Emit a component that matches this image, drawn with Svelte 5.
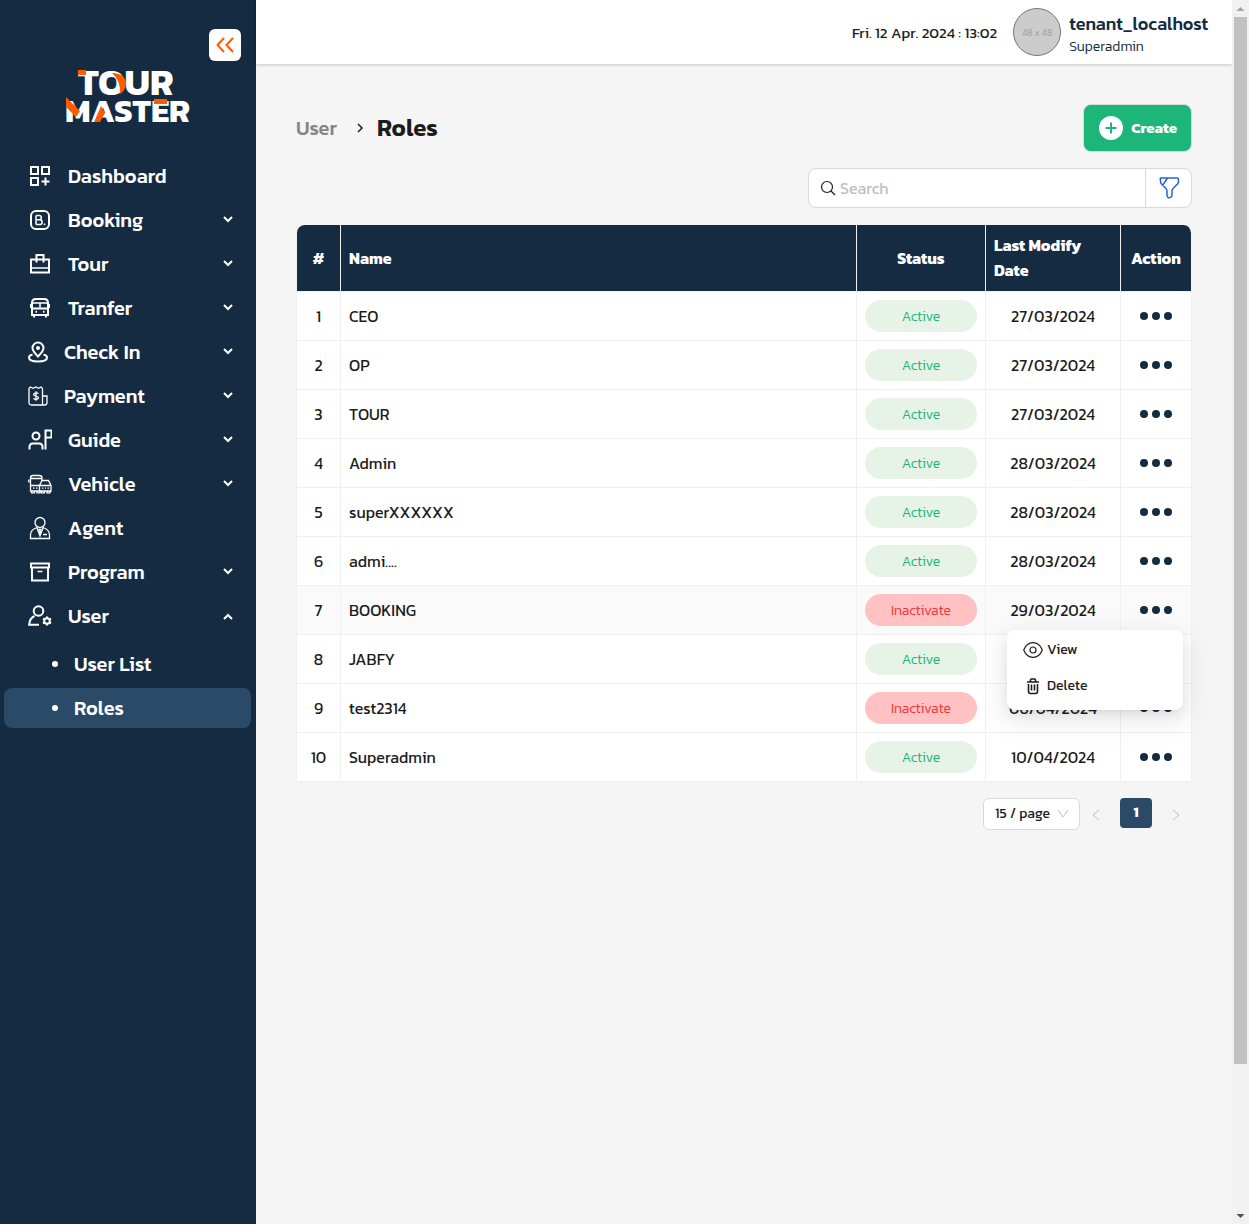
<script>
  const menu = [
    { label: 'Dashboard', icon: 'dashboard' },
    { label: 'Booking', icon: 'booking', expandable: true },
    { label: 'Tour', icon: 'tour', expandable: true },
    { label: 'Tranfer', icon: 'bus', expandable: true },
    { label: 'Check In', icon: 'pin', expandable: true, narrow: true },
    { label: 'Payment', icon: 'payment', expandable: true, narrow: true },
    { label: 'Guide', icon: 'guide', expandable: true },
    { label: 'Vehicle', icon: 'vehicle', expandable: true },
    { label: 'Agent', icon: 'agent' },
    { label: 'Program', icon: 'program', expandable: true },
    { label: 'User', icon: 'user', expandable: true, open: true, children: ['User List', 'Roles'] }
  ];

  const rows = [
    { name: 'CEO', active: true, date: '27/03/2024' },
    { name: 'OP', active: true, date: '27/03/2024' },
    { name: 'TOUR', active: true, date: '27/03/2024' },
    { name: 'Admin', active: true, date: '28/03/2024' },
    { name: 'superXXXXXX', active: true, date: '28/03/2024' },
    { name: 'admi....', active: true, date: '28/03/2024' },
    { name: 'BOOKING', active: false, date: '29/03/2024' },
    { name: 'JABFY', active: true, date: '03/04/2024' },
    { name: 'test2314', active: false, date: '06/04/2024' },
    { name: 'Superadmin', active: true, date: '10/04/2024' }
  ];

  let openRow = $state(6);
  let search = $state('');
  let selected = $state('Roles');
</script>

{#snippet menuIcon(name)}
  {#if name === 'dashboard'}
    <path d="M3 3h7v7H3zM14 3h7v7h-7zM3 14h7v7H3zM17.500 13.500v8M13.500 17.500h8" />
  {:else if name === 'booking'}
    <rect x="3" y="3" width="18" height="18" rx="5" />
    <path class="medium" d="M8 7.500v9M8 7.500h3.200a2.100 2.100 0 0 1 0 4.300H8M8 11.800h3.800a2.300 2.300 0 0 1 0 4.700H8M16.500 15.500v1.700" />
  {:else if name === 'tour'}
    <path d="M3 7.500h18v13H3zM8.500 10.500V3h7v7.500" />
    <path class="medium" d="M3 16h18" />
  {:else if name === 'bus'}
    <path d="M4 7q0-4 4-4h8q4 0 4 4v12H4zM4 12.500h16M6 19v2.500M18 19v2.500M3 8v4M21 8v4" />
    <path class="medium" d="M4 7h16M12 7v5.500" />
    <path d="M7.500 15.800h1.500M15 15.800h1.500" />
  {:else if name === 'pin'}
    <path d="M10 15.500C6 11.500 4.500 9.500 4.500 7a5.500 5.500 0 0 1 11 0c0 2.500-1.500 4.500-5.500 8.500z" />
    <circle cx="10" cy="7" r="1" />
    <path d="M4.500 13.500C2.500 14 1 15 1 16.500 1 19 5 20.500 10 20.500s9-1.500 9-4c0-1.500-1.500-2.500-3.500-3" />
  {:else if name === 'payment'}
    <g class="thin">
      <path d="M1 3.500 2.500 2 5 3.300 8 2l2.500 1.300L13 2l1.500 1.500V20H3.500Q1 20 1 17.500zM14.500 11H19v6.500q0 2.500-2.500 2.500h-3" />
      <path d="M10.500 8.700C9.500 7.500 5.700 7.400 5.700 9.400c0 2.200 4.800 1.200 4.800 3.400 0 2-4 1.900-5 .5M8 6.300v9.500" />
    </g>
  {:else if name === 'guide'}
    <circle cx="8" cy="8" r="3.500" />
    <path d="M1.500 21.500V19q0-3.500 3.500-3.500h6q3.500 0 3.500 3.500v2.500M17.500 21.500V2.500h6v7h-6" />
  {:else if name === 'vehicle'}
    <g class="thin">
      <path d="M12 19H2.500V6q0-2.500 2.500-2.500h6.500q2.500 0 2.500 2.500v3M2.500 6.500H14M2.500 13.500h9M.8 7.500v3" />
      <path d="M11.500 19v-5.500L14 8.500h6.500l2.500 5V19zM11.500 13.500H23" />
      <path d="M5 16.200h1.500M8 16.200h1.500M14 16.200h1.500M17 16.200h1M19.500 16.200H21M3.500 19v1.800h3V19M9 19v1.800h3V19M13.500 19v1.800h3V19M19 19v1.800h3V19" />
    </g>
  {:else if name === 'agent'}
    <g class="thin">
      <circle cx="12" cy="6.500" r="5" />
      <path d="M8.800 11.500C4.500 13 2.500 15.500 2.500 19v3.500h19V19c0-3.500-2-6-6.300-7.500M8.800 11.500 12 20l3.200-8.500M15 18.500h4" />
      <path d="M11 13.500 12 19l1-5.500z" />
    </g>
  {:else if name === 'program'}
    <path d="M3 3.500h18v4H3zM4 7.500v13h16v-13" />
    <path class="medium" d="M9.500 11.500h5" />
  {:else if name === 'user'}
    <circle cx="10.500" cy="7" r="4.800" />
    <path d="M6.500 12C3 13.500 1.500 17 1.200 20.700h9.800" />
    <circle cx="19" cy="17" r="2.800" />
    <path d="M19 12.500v2M19 19.500v2M15 14.700l1.700 1M21.300 18.300l1.700 1M15 19.300l1.700-1M21.300 15.700l1.700-1" />
  {/if}
{/snippet}

<div class="app">
  <aside class="sidebar">
    <div class="collapse-row">
      <button class="collapse" aria-label="Collapse menu">
        <svg width="20" height="20" viewBox="0 0 20 20"><path d="M9 3 2.500 10 9 17M18 3l-6.500 7 6.500 7" /></svg>
      </button>
    </div>
    <svg class="logo" width="124" height="56" viewBox="0 0 124 56" role="img" aria-label="Tour Master">
      <text x="12" y="27" font-size="37">TOUR</text>
      <text x="-1" y="54" font-size="33">MASTER</text>
      <path d="M12 2h8v5h-8zM46 5q13 0 14 10 0 7-6 11 1-13-8-21zM0 29l14 14-4 6L0 39zM28 54l7-16 4 7-5 9zM88 31h13v5H88z" />
    </svg>
    <nav class="menu">
      {#each menu as item}
        <button class="item" aria-expanded={item.expandable ? !!item.open : undefined}>
          <svg class="glyph" width={item.narrow ? 20 : 24} height="24" viewBox={item.narrow ? '0 0 20 22' : '0 0 24 24'}>
            {@render menuIcon(item.icon)}
          </svg>
          <span>{item.label}</span>
          {#if item.expandable}
            <svg class="caret" class:up={item.open} width="12" height="12" viewBox="0 0 12 12"><path d="m2 3 4 4 4-4" /></svg>
          {/if}
        </button>
        {#if item.children}
          <div class="submenu">
            {#each item.children as child}
              <button class="subitem" class:selected={selected === child} onclick={() => (selected = child)}>
                <i class="bullet"></i>{child}
              </button>
            {/each}
          </div>
        {/if}
      {/each}
    </nav>
  </aside>

  <div class="page">
    <header class="topbar">
      <time>Fri. 12 Apr. 2024 : 13:02</time>
      <div class="avatar">48 x 48</div>
      <div class="account">
        <strong>tenant_localhost</strong>
        <span>Superadmin</span>
      </div>
    </header>

    <main>
      <div class="title-row">
        <div class="crumbs">
          <a href="#user">User</a>
          <svg width="12" height="12" viewBox="0 0 12 12"><path d="m4 2 4 4-4 4" /></svg>
          <h1>Roles</h1>
        </div>
        <button class="create">
          <svg width="24" height="24" viewBox="0 0 24 24"><circle cx="12" cy="12" r="12" /><path d="M12 6.500v11M6.500 12h11" /></svg>
          Create
        </button>
      </div>

      <div class="search">
        <label>
          <svg width="16" height="16" viewBox="0 0 16 16"><circle cx="7" cy="7" r="5.500" /><path d="m11 11 4 4" /></svg>
          <input type="text" placeholder="Search" aria-label="Search" bind:value={search} />
        </label>
        <button class="filter" aria-label="Filter">
          <svg width="22" height="24" viewBox="0 0 22 24"><path d="M3 2h16q1.500 0 1.500 1.500v2q0 1.500-1 2.500l-4 4q-1.500 1.500-1.500 3v4q0 1.500-1 2.200-1.500 1-3 .3-1-.7-1-2.500v-4q0-1.500-1.500-3l-4-4q-1-1-1-2.500v-2Q1.500 2 3 2zM9.500 2 4.500 9.500" /></svg>
        </button>
      </div>

      <table>
        <colgroup>
          <col class="c-num" /><col /><col class="c-status" /><col class="c-date" /><col class="c-action" />
        </colgroup>
        <thead>
          <tr>
            <th class="center">#</th>
            <th>Name</th>
            <th class="center">Status</th>
            <th>Last Modify Date</th>
            <th class="center">Action</th>
          </tr>
        </thead>
        <tbody>
          {#each rows as row, i}
            <tr class:hovered={openRow === i}>
              <td class="center">{i + 1}</td>
              <td>{row.name}</td>
              <td><span class="badge" class:inactive={!row.active}>{row.active ? 'Active' : 'Inactivate'}</span></td>
              <td class="center">{row.date}</td>
              <td class="action">
                <button class="more" aria-label="Actions for {row.name}" onclick={() => (openRow = openRow === i ? -1 : i)}>
                  <i></i><i></i><i></i>
                </button>
                {#if openRow === i}
                  <div class="dropdown">
                    <button>
                      <svg width="20" height="20" viewBox="0 0 20 20"><path d="M.7 10C2.500 5.500 6 2.700 10 2.700s7.500 2.800 9.300 7.300c-1.800 4.500-5.300 7.300-9.300 7.300S2.500 14.500.7 10z" /><circle cx="10" cy="10" r="3" /></svg>
                      View
                    </button>
                    <button>
                      <svg class="bold" width="20" height="20" viewBox="0 0 20 20"><path d="M4 6h12M7.500 5.500V4q0-1 1-1h3q1 0 1 1v1.500M5.500 8v7.500q0 2 2 2h5q2 0 2-2V8M8.500 8.500v6M11.500 8.500v6" /></svg>
                      Delete
                    </button>
                  </div>
                {/if}
              </td>
            </tr>
          {/each}
        </tbody>
      </table>

      <div class="pagination">
        <div class="size">
          <select aria-label="Rows per page">
            <option>15 / page</option>
            <option>30 / page</option>
          </select>
          <svg width="12" height="12" viewBox="0 0 12 12"><path d="m1 2 5 7 5-7" /></svg>
        </div>
        <button class="step" aria-label="Previous page" disabled>
          <svg width="12" height="12" viewBox="0 0 12 12"><path d="M9 1 3 6l6 5" /></svg>
        </button>
        <button class="current" aria-current="page">1</button>
        <button class="step" aria-label="Next page" disabled>
          <svg width="12" height="12" viewBox="0 0 12 12"><path d="m3 1 6 5-6 5" /></svg>
        </button>
      </div>
    </main>
  </div>

  <div class="scrollbar" aria-hidden="true">
    <svg width="17" height="17" viewBox="0 0 17 17"><path d="m4.500 11 4-4 4 4z" /></svg>
    <div class="track"><div class="thumb"></div></div>
    <svg class="down" width="17" height="17" viewBox="0 0 17 17"><path d="m4.500 7 4 4 4-4z" /></svg>
  </div>
</div>

<style>
  :global(body) {
    margin: 0;
    background: #f5f5f5;
  }
  .app {
    --navy: #152b41;
    --blue: #2a4a68;
    display: flex;
    min-height: 100vh;
    font-family: Kanit, Roboto, "Liberation Sans", sans-serif;
    font-size: 16px;
    color: #1c1c1c;
  }
  .app * {
    box-sizing: border-box;
  }
  button,
  input,
  select {
    font: inherit;
    color: inherit;
    margin: 0;
    padding: 0;
    border: 0;
    background: none;
  }
  button {
    cursor: pointer;
  }
  svg {
    display: block;
    flex: none;
    fill: none;
    stroke: currentColor;
  }

  .sidebar {
    flex: none;
    width: 256px;
    background: var(--navy);
    color: #fff;
  }
  .collapse-row {
    display: flex;
    justify-content: flex-end;
    padding: 29px 15px 0;
  }
  .collapse {
    display: grid;
    place-items: center;
    width: 32px;
    height: 32px;
    border-radius: 6px;
    background: #fff;
    color: #ff5c00;
  }
  .collapse svg {
    stroke-width: 2;
  }
  .logo {
    margin: 7px 0 0 66px;
    stroke: none;
    overflow: visible;
  }
  .logo text {
    fill: #fff;
    font-weight: 700;
  }
  .logo path {
    fill: #ff5c00;
  }
  .menu {
    display: flex;
    flex-direction: column;
    gap: 4px;
    padding: 32px 5px 0 4px;
  }
  .item {
    display: flex;
    align-items: center;
    gap: 16px;
    height: 40px;
    padding: 0 17px 0 24px;
    font-size: 20px;
    font-weight: 500;
    text-align: left;
  }
  .glyph {
    stroke-width: 2;
  }
  .glyph .thin {
    stroke-width: 1.3;
  }
  .glyph .medium {
    stroke-width: 1.5;
  }
  .caret {
    margin-left: auto;
    stroke-width: 2;
  }
  .caret.up {
    transform: rotate(180deg);
  }
  .submenu {
    display: flex;
    flex-direction: column;
    gap: 4px;
    padding: 4px 0;
  }
  .subitem {
    display: flex;
    align-items: center;
    gap: 16px;
    height: 40px;
    padding-left: 48px;
    border-radius: 8px;
    font-size: 20px;
    font-weight: 500;
  }
  .subitem.selected {
    background: var(--blue);
  }
  .bullet {
    width: 6px;
    height: 6px;
    border-radius: 50%;
    background: #fff;
  }

  .page {
    flex: 1;
    min-width: 0;
  }
  .topbar {
    display: flex;
    align-items: center;
    justify-content: flex-end;
    height: 64px;
    padding-right: 24px;
    background: #fff;
    box-shadow: 0 1px 3px rgba(0, 0, 0, 0.2);
  }
  .topbar time {
    font-size: 15px;
  }
  .avatar {
    display: grid;
    place-items: center;
    width: 48px;
    height: 48px;
    margin: 0 8px 0 16px;
    border: 1px solid #777;
    border-radius: 50%;
    background: #ccc;
    color: #9c9c9c;
    font-family: "Open Sans", sans-serif;
    font-size: 9px;
  }
  .account {
    display: flex;
    flex-direction: column;
    padding-top: 8px;
    color: var(--navy);
  }
  .account strong {
    font-size: 18px;
    font-weight: 500;
    line-height: 22px;
  }
  .account span {
    font-size: 14px;
    font-weight: 300;
    line-height: 24px;
  }

  main {
    padding: 40px;
  }
  .title-row {
    display: flex;
    align-items: center;
    justify-content: space-between;
  }
  .crumbs {
    display: flex;
    align-items: center;
  }
  .crumbs a {
    color: #868686;
    font-size: 20px;
    font-weight: 500;
    text-decoration: none;
  }
  .crumbs svg {
    margin: 0 11px 0 17px;
    stroke-width: 1.5;
  }
  h1 {
    margin: 0;
    padding-bottom: 2px;
    font-size: 24px;
    font-weight: 600;
  }
  .create {
    display: flex;
    align-items: center;
    gap: 8px;
    height: 48px;
    padding: 0 14px 1px 15px;
    border: 1px solid #d9d9d9;
    border-radius: 8px;
    background: #1cb57a;
    color: #fff;
    font-size: 15px;
    font-weight: 700;
  }
  .create circle {
    fill: #fff;
    stroke: none;
  }
  .create path {
    stroke: #1cb57a;
    stroke-width: 2;
  }

  .search {
    display: flex;
    width: 384px;
    height: 40px;
    margin: 16px 0 17px auto;
    border: 1px solid #d9d9d9;
    border-radius: 8px;
    background: #fff;
  }
  .search label {
    display: flex;
    flex: 1;
    align-items: center;
    gap: 4px;
    min-width: 0;
    padding-left: 11px;
  }
  .search label svg {
    stroke-width: 1.2;
  }
  .search input {
    flex: 1;
    min-width: 0;
    outline: none;
  }
  .search input::placeholder {
    color: #bfbfbf;
    opacity: 1;
  }
  .filter {
    display: grid;
    place-items: center;
    width: 46px;
    border-left: 1px solid #d9d9d9;
    color: #2860d8;
  }
  .filter svg {
    stroke-width: 1.5;
  }

  table {
    width: 100%;
    table-layout: fixed;
    border-collapse: separate;
    border-spacing: 0;
    border-left: 1px solid #f0f0f0;
  }
  .c-num {
    width: 44px;
  }
  .c-status {
    width: 129px;
  }
  .c-date {
    width: 135px;
  }
  .c-action {
    width: 71px;
  }
  th,
  td {
    padding: 8px;
    border-right: 1px solid #f0f0f0;
    border-bottom: 1px solid #f0f0f0;
    text-align: left;
  }
  th {
    background: var(--navy);
    color: #fff;
    font-weight: 700;
    line-height: 25px;
  }
  th:first-child {
    border-top-left-radius: 8px;
  }
  th:last-child {
    border-right-color: #f5f5f5;
    border-top-right-radius: 8px;
    background-clip: padding-box;
  }
  td {
    height: 49px;
    background: #fff;
    line-height: 32px;
  }
  .hovered td {
    background: #fafafa;
  }
  .center {
    text-align: center;
  }
  th.center {
    padding-right: 0;
    padding-left: 0;
  }
  .badge {
    display: block;
    height: 32px;
    border-radius: 16px;
    background: #e8f3e8;
    color: #1cb57a;
    font-size: 14px;
    font-weight: 300;
    line-height: 34px;
    text-align: center;
  }
  .badge.inactive {
    background: #ffc1c1;
    color: #f5333f;
  }
  .action {
    position: relative;
  }
  .more {
    display: flex;
    align-items: center;
    justify-content: center;
    gap: 4px;
    width: 100%;
    height: 32px;
  }
  .more i {
    width: 8px;
    height: 8px;
    border-radius: 50%;
    background: var(--navy);
  }
  .dropdown {
    position: absolute;
    z-index: 2;
    top: 44px;
    right: 8px;
    width: 176px;
    padding: 2px 4px 6px;
    border-radius: 8px;
    background: #fff;
    box-shadow:
      0 6px 16px rgba(0, 0, 0, 0.08),
      0 3px 6px -4px rgba(0, 0, 0, 0.12),
      0 9px 28px 8px rgba(0, 0, 0, 0.05);
  }
  .dropdown button {
    display: flex;
    align-items: center;
    gap: 4px;
    width: 100%;
    height: 36px;
    padding: 0 12px;
    font-size: 14px;
  }
  .dropdown svg {
    stroke-width: 1.2;
  }
  .dropdown .bold {
    stroke-width: 1.6;
  }

  .pagination {
    display: flex;
    justify-content: flex-end;
    gap: 8px;
    padding-top: 16px;
    font-size: 14px;
  }
  .size {
    display: grid;
    align-items: center;
    width: 97px;
    height: 32px;
    border: 1px solid #d9d9d9;
    border-radius: 6px;
    background: #fff;
  }
  .size select,
  .size svg {
    grid-area: 1 / 1;
  }
  .size select {
    height: 30px;
    padding: 0 0 2px 11px;
    appearance: none;
    outline: none;
  }
  .size svg {
    justify-self: end;
    margin-right: 10px;
    color: #bfbfbf;
    pointer-events: none;
  }
  .step {
    display: grid;
    place-items: center;
    width: 16px;
    height: 34px;
    color: #bfbfbf;
  }
  .step:last-child {
    width: 32px;
  }
  .current {
    width: 32px;
    height: 30px;
    margin-left: 8px;
    padding-bottom: 2px;
    border-radius: 4px;
    background: var(--blue);
    color: #fff;
    font-weight: 700;
  }

  .scrollbar {
    display: flex;
    flex: none;
    flex-direction: column;
    width: 17px;
    background: #f1f1f1;
    color: #a3a3a3;
  }
  .scrollbar svg {
    fill: currentColor;
    stroke: none;
  }
  .scrollbar .down {
    color: #505050;
  }
  .track {
    flex: 1;
    padding: 0 2px;
  }
  .thumb {
    height: 88%;
    background: #c1c1c1;
  }
</style>
